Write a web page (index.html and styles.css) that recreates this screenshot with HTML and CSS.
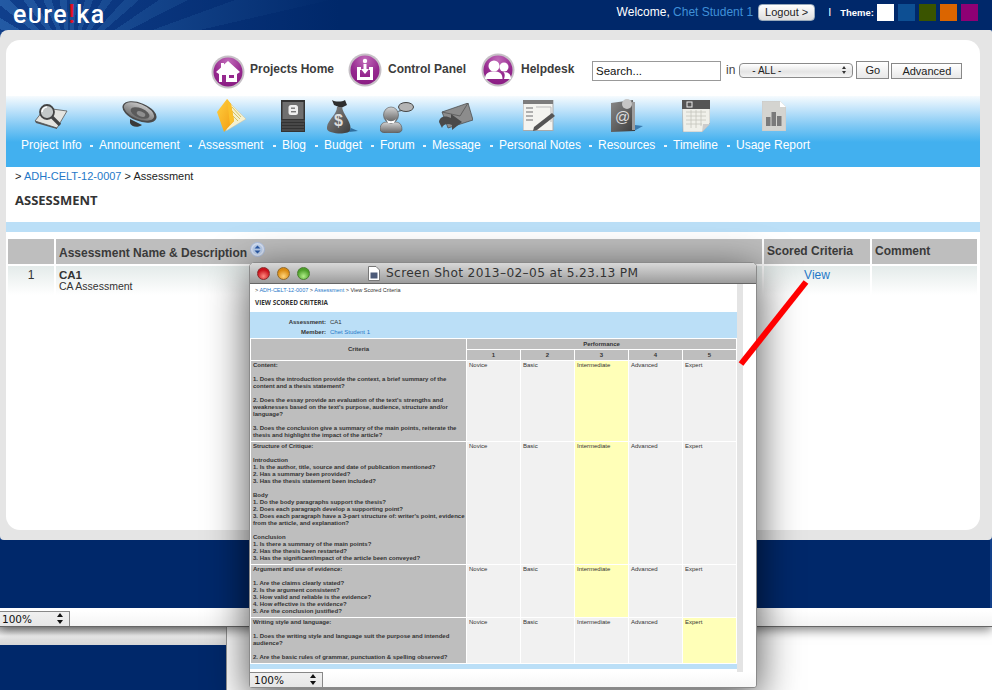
FILE: index.html
```html
<!DOCTYPE html>
<html lang="en">
<head>
<meta charset="utf-8">
<title>eUreka Assessment</title>
<link rel="stylesheet" href="styles.css">
</head>
<body>
<svg class="defs" width="0" height="0">
  <defs>
    <radialGradient id="dg" cx=".5" cy=".15" r=".95"><stop offset="0" stop-color="#c06ab8"/><stop offset=".55" stop-color="#96298f"/><stop offset="1" stop-color="#86187f"/></radialGradient>
    <linearGradient id="gm" x1="0" y1="0" x2="0" y2="1"><stop offset="0" stop-color="#d4d4d4"/><stop offset="1" stop-color="#5c5c5c"/></linearGradient>
    <linearGradient id="gd" x1="0" y1="0" x2="1" y2="1"><stop offset="0" stop-color="#8a8a8a"/><stop offset="1" stop-color="#3a3a3a"/></linearGradient>
    <linearGradient id="gl" x1="0" y1="0" x2="0" y2="1"><stop offset="0" stop-color="#c4c4c4"/><stop offset="1" stop-color="#6c6c6c"/></linearGradient>
    <linearGradient id="gf" x1="0" y1="0" x2="1" y2="1"><stop offset="0" stop-color="#ffd040"/><stop offset="1" stop-color="#f29a10"/></linearGradient>
    <g id="disc"><circle cx="17" cy="17" r="16.500" fill="#c6c0c6"/><circle cx="17" cy="17" r="14.500" fill="url(#dg)"/></g>
  </defs>
</svg>
<div class="desk">
  <div class="back-strip"><div class="back-navy"></div></div>

  <div class="win-back">
    <header class="topbar">
      <div class="logo">e<span class="cap">U</span>re<span class="bang">!</span>ka</div>
      <div class="user">
        <span class="welcome">Welcome, <a class="lnk">Chet Student 1</a></span>
        <button class="logout">Logout &gt;</button>
        <span class="sep">I</span>
        <span class="theme">Theme:</span>
        <i class="sw s1"></i><i class="sw s2"></i><i class="sw s3"></i><i class="sw s4"></i><i class="sw s5"></i>
      </div>
    </header>
    <div class="frame">
      <main class="card">
        <div class="toprow">
          <a class="hl"><svg class="disc" viewBox="0 0 34 34"><use href="#disc"/><path d="M17 6 L29 17 L26 19 V27 H8 V19 L5 17 L10 12.500 V8 H13 V9.500 Z" fill="#fff"/><rect x="18" y="20" width="5" height="3" fill="#96298f"/><rect x="11" y="20" width="4" height="7" fill="#96298f"/></svg><b>Projects Home</b></a>
          <a class="hl"><svg class="disc" viewBox="0 0 34 34"><use href="#disc"/><path d="M9 14 H13 V17 H12 V24 H22 V17 H21 V14 H25 V27 H9 Z" fill="#fff"/><circle cx="17" cy="8" r="2.200" fill="#fff"/><path d="M15.500 11 H18.500 V16 H21 L17 21 L13 16 H15.500 Z" fill="#fff"/></svg><b>Control Panel</b></a>
          <a class="hl"><svg class="disc" viewBox="0 0 34 34"><use href="#disc"/><circle cx="13" cy="13" r="5.500" fill="#fff"/><path d="M4 26 C4 20 8 18.500 13 18.500 C18 18.500 21.500 20 21.500 26 Z" fill="#fff"/><circle cx="23" cy="14" r="4.500" fill="#fff"/><path d="M23 26 H30 C30 20.500 27 19 22.500 19 C24 20.500 24 23 23 26 Z" fill="#fff"/></svg><b>Helpdesk</b></a>
          <form class="search">
            <input class="q" value="Search...">
            <span class="in">in</span>
            <span class="sel">- ALL -<span class="arrows"><i class="up"></i><i class="dn"></i></span></span>
            <button type="button" class="go">Go</button>
            <button type="button" class="adv">Advanced</button>
          </form>
        </div>

        <nav class="nav">
          <a class="ni w-info"><svg viewBox="0 0 34 26"><path d="M1 18 L11 5 L33 8 L23 25 Z" fill="#e4e4e0" stroke="#555" stroke-width=".8"/><path d="M1 18 L23 25 L23 26 L2 20Z" fill="#555"/><circle cx="13" cy="9" r="7" fill="#c4c8c8" stroke="#444" stroke-width="1.800"/><path d="M13 4 A5 5 0 0 0 8 9" fill="none" stroke="#fff" stroke-width="1.500"/><path d="M18 14 L26 22" stroke="#444" stroke-width="3.200"/></svg><span>Project Info</span></a>
          <a class="ni w-ann"><svg viewBox="0 0 35 26"><path d="M8 18 L20 24 C16 27 9 26 8 22 Z" fill="#3a3a3a"/><ellipse cx="17.500" cy="11" rx="18" ry="9" transform="rotate(22 17.500 11)" fill="#4a4a4a"/><ellipse cx="17" cy="10.500" rx="16" ry="7.500" transform="rotate(22 17 10.500)" fill="url(#gl)"/><ellipse cx="18" cy="12" rx="10" ry="4.800" transform="rotate(22 18 12)" fill="#5a5a5a"/><ellipse cx="19" cy="13" rx="4.500" ry="2.400" transform="rotate(22 19 13)" fill="#8e8e8e"/></svg><span>Announcement</span></a>
          <a class="ni w-ass"><svg viewBox="0 0 29 33"><path d="M12 3 L29 20 L9 32 Z" fill="#f5f0cf" stroke="#c8c0a0" stroke-width=".5"/><path d="M15 8 L24 18 M14 11 L23 20 M13 14 L21 22" stroke="#c9b84c" stroke-width=".8"/><path d="M0 13 L10 0 L14 5 L17 22 L7 33 Z" fill="url(#gf)"/><path d="M10 0 L14 5 L17 22 L13 26 Z" fill="#fbc02a"/></svg><span>Assessment</span></a>
          <a class="ni w-blog"><svg viewBox="0 0 24 32"><rect width="24" height="32" fill="#333"/><rect x="1.500" y="2" width="21" height="17" fill="#6f6f6f"/><rect x="7.500" y="5" width="9.500" height="10" rx="2.500" fill="#eee"/><rect x="10" y="7.500" width="4" height="1.400" fill="#777"/><rect x="10" y="11" width="5" height="1.400" fill="#777"/><path d="M0 21 H24 M1 24 H23 M1 27 H23 M1 30 H23" stroke="#6a6a6a" stroke-width=".8"/></svg><span>Blog</span></a>
          <a class="ni w-bud"><svg viewBox="0 0 31 35"><path d="M5 1 C8 3 15 3 18 1 L20 6 L14 9 L7 6Z" fill="#2e2e2e"/><path d="M10 8 C10 16 -1 22 0 30 C1 35 20 36 23 32 C26 24 16 16 15 8 Z" fill="url(#gd)"/><path d="M22 33 L31 32 L24 29Z" fill="#2f6e9e"/><text x="7" y="27" class="dollar">$</text></svg><span>Budget</span></a>
          <a class="ni w-for"><svg viewBox="0 0 34 31"><path d="M0 28 C0 20 5 19 11 21 C17 19 22 20 22 28 C21 33 1 33 0 28Z" fill="url(#gm)" stroke="#555" stroke-width=".6"/><ellipse cx="11" cy="13" rx="7.500" ry="8" fill="url(#gm)" stroke="#555" stroke-width=".6"/><path d="M6 17 C9 20 13 20 16 17 L14 21 H8Z" fill="#fff"/><ellipse cx="26" cy="5" rx="7.500" ry="4.500" fill="#b4b4b4" stroke="#444" stroke-width="1"/><path d="M20 8 L17 10 L22 9Z" fill="#555"/></svg><span>Forum</span></a>
          <a class="ni w-msg"><svg viewBox="0 0 34 27"><path d="M3 9 L29 0 L34 17 L9 25 Z" fill="#8c8c8c" stroke="#444" stroke-width=".7"/><path d="M3 9 L21 13 L29 0" fill="none" stroke="#555" stroke-width=".8"/><path d="M0 19 C1 12 8 13 12 15 L12 11 L23 19 L13 27 L13 22 C9 20 4 21 3 25 Z" fill="#4a4a4a"/></svg><span>Message</span></a>
          <a class="ni w-note"><svg viewBox="0 0 32 31"><rect width="30" height="30" y="0.500" fill="#f4f4f0" stroke="#aaa"/><rect width="30" height="4" fill="#7c7c7c"/><path d="M3 8 H10 M3 12 H10 M3 16 H10 M3 20 H10" stroke="#999" stroke-width="1.300"/><path d="M13 7 H28 V22" fill="none" stroke="#bbb"/><path d="M29 13 L32 16 L14 30 L10 31 L11 27 Z" fill="#555"/></svg><span>Personal Notes</span></a>
          <a class="ni w-res"><svg viewBox="0 0 32 34"><path d="M23 32 L32 27 L24 26Z" fill="#3a7cb0"/><path d="M0 4 L22 1 L24 32 L0 33 Z" fill="url(#gd)"/><rect x="21" y="3" width="3" height="28" fill="#9c9c9c"/><circle cx="16" cy="5" r="5" fill="#c6c6c6"/><text x="4" y="23" class="at">@</text></svg><span>Resources</span></a>
          <a class="ni w-time"><svg viewBox="0 0 28 32"><path d="M0 0 H28 V23 L20 32 H1 Z" fill="#f0f0ea" stroke="#999" stroke-width=".5"/><rect width="28" height="9" fill="#555"/><rect x="5" y="2" width="5" height="5" fill="none" stroke="#eee"/><path d="M4 12 H24 M4 16 H24 M4 20 H24 M4 24 H20 M9 10 V28 M14 10 V28 M19 10 V26" stroke="#c4c4bc" stroke-width=".8"/><path d="M20 32 L21 24 H28Z" fill="#ccc"/></svg><span>Timeline</span></a>
          <a class="ni w-usage"><svg viewBox="0 0 24 30"><path d="M0 0 H18 L24 6 V30 H0 Z" fill="#d4d4d0" stroke="#c0c0c0" stroke-width=".5"/><path d="M18 0 V6 H24Z" fill="#fff"/><rect x="4" y="16" width="4.500" height="9" fill="#7a7a7a"/><rect x="9.500" y="11" width="4.500" height="14" fill="#7a7a7a"/><rect x="15" y="15" width="4.500" height="10" fill="#7a7a7a"/></svg><span>Usage Report</span></a>
        </nav>

        <div class="crumb">&gt; <a class="lnk">ADH-CELT-12-0007</a> &gt; Assessment</div>
        <h1 class="title">ASSESSMENT</h1>
        <div class="band"></div>

        <table class="list">
          <colgroup><col class="c1"><col class="c2"><col class="c3"><col class="c4"></colgroup>
          <thead><tr><th></th><th class="nm"><span>Assessment Name &amp; Description</span><svg class="sort" viewBox="0 0 15 15"><circle cx="7.500" cy="7.500" r="7" fill="#dbe5f6" stroke="#aebfdf"/><circle cx="7.500" cy="7.500" r="5" fill="#bcd0ee"/><path d="M4.500 6.500 L7.500 3.500 L10.500 6.500Z M4.500 8.500 L7.500 11.500 L10.500 8.500Z" fill="#2a5aa8"/></svg></th><th>Scored Criteria</th><th>Comment</th></tr></thead>
          <tbody><tr>
            <td class="idx">1</td>
            <td class="desc"><b class="ca">CA1</b><br>CA Assessment</td>
            <td class="view"><a class="lnk">View</a></td>
            <td></td>
          </tr></tbody>
        </table>
      </main>
    </div>
    <div class="navy"></div>
    <div class="status"><div class="zoom">100%<span class="arrows big"><i class="up"></i><i class="dn"></i></span></div></div>
  </div>

  <section class="win-front">
    <div class="tbar">
      <i class="dot red"></i><i class="dot amber"></i><i class="dot green"></i>
      <div class="wtitle"><svg class="doc" viewBox="0 0 12 15"><path d="M.5.500 H8 L11.500 4 V14.500 H.5 Z" fill="#fff" stroke="#777"/><rect x="2.500" y="6.500" width="7" height="6" fill="#4c5a78"/></svg>Screen Shot 2013–02–05 at 5.23.13 PM</div>
    </div>
    <div class="shot">
      <div class="page">
        <div class="s-crumb">&gt; <a class="lnk">ADH-CELT-12-0007</a> &gt; <a class="lnk">Assessment</a> &gt; View Scored Criteria</div>
        <div class="s-title">VIEW SCORED CRITERIA</div>
        <div class="s-band">
          <div class="s-kv"><b>Assessment:</b><span>CA1</span></div>
          <div class="s-kv"><b>Member:</b><a class="lnk">Chet Student 1</a></div>
        </div>
        <table class="crit">
          <colgroup><col class="cc"><col class="cp"><col class="cp"><col class="cp"><col class="cp"><col class="cp"></colgroup>
          <thead>
            <tr class="h1"><th rowspan="2">Criteria</th><th colspan="5">Performance</th></tr>
            <tr class="h2"><th>1</th><th>2</th><th>3</th><th>4</th><th>5</th></tr>
          </thead>
          <tbody>
            <tr class="r1"><td class="q-c">Content:<br><br>1. Does the introduction provide the context, a brief summary of the content and a thesis statement?<br><br>2. Does the essay provide an evaluation of the text's strengths and weaknesses based on the text's purpose, audience, structure and/or language?<br><br>3. Does the conclusion give a summary of the main points, reiterate the thesis and highlight the impact of the article?</td><td>Novice</td><td>Basic</td><td class="hit">Intermediate</td><td>Advanced</td><td>Expert</td></tr>
            <tr class="r2"><td class="q-c">Structure of Critique:<br><br>Introduction<br>1. Is the author, title, source and date of publication mentioned?<br>2. Has a summary been provided?<br>3. Has the thesis statement been included?<br><br>Body<br>1. Do the body paragraphs support the thesis?<br>2. Does each paragraph develop a supporting point?<br>3. Does each paragraph have a 3-part structure of: writer's point, evidence from the article, and explanation?<br><br>Conclusion<br>1. Is there a summary of the main points?<br>2. Has the thesis been restarted?<br>3. Has the significant/impact of the article been conveyed?</td><td>Novice</td><td>Basic</td><td class="hit">Intermediate</td><td>Advanced</td><td>Expert</td></tr>
            <tr class="r3"><td class="q-c">Argument and use of evidence:<br><br>1. Are the claims clearly stated?<br>2. Is the argument consistent?<br>3. How valid and reliable is the evidence?<br>4. How effective is the evidence?<br>5. Are the conclusion justified?</td><td>Novice</td><td>Basic</td><td class="hit">Intermediate</td><td>Advanced</td><td>Expert</td></tr>
            <tr class="r4"><td class="q-c">Writing style and language:<br><br>1. Does the writing style and language suit the purpose and intended audience?<br><br>2. Are the basic rules of grammar, punctuation &amp; spelling observed?</td><td>Novice</td><td>Basic</td><td>Intermediate</td><td>Advanced</td><td class="hit">Expert</td></tr>
          </tbody>
        </table>
        <div class="s-foot"></div>
      </div>
      <div class="scrollbar"></div>
    </div>
    <div class="status front"><div class="zoom">100%<span class="arrows big"><i class="up"></i><i class="dn"></i></span></div></div>
  </section>

  <svg class="arrow" viewBox="0 0 992 690"><path d="M741 364 L806 282" stroke="#f00" stroke-width="6"/></svg>
</div>
</body>
</html>
```
FILE: styles.css
```css
* { box-sizing: border-box; }
html, body { margin: 0; padding: 0; }
body { width: 992px; height: 690px; overflow: hidden; background: #fff; font-family: "Liberation Sans", Arial, sans-serif; color: #2b2b2b; }
.defs { position: absolute; }
.lnk { color: #1f78c8; }

.desk { position: relative; width: 992px; height: 690px; overflow: hidden; background: #fff; }

/* window behind the back window */
.back-strip { position: absolute; left: 0; top: 627px; width: 227px; height: 63px; background: linear-gradient(#bdbdbd, #f2f2f2 9px, #e0e0e0 13px, #d8d8d8 18px); border-right: 1px solid #999; }
.back-navy { margin-top: 18px; height: 45px; background: #00286a; }

/* main browser window */
.win-back { position: absolute; left: 0; top: 0; width: 992px; height: 627px; background: #12408a; display: flex; flex-direction: column; border-bottom: 1px solid #666; box-shadow: 0 3px 10px rgba(0,0,0,.5); }
.topbar { height: 30px; flex: none; display: flex; justify-content: space-between; background: linear-gradient(90deg, rgba(0,40,106,0) 0, #00286a 340px), repeating-conic-gradient(from 0deg at 70px 60px, #235aa4 0 7deg, #103f8c 7deg 14deg); }
.logo { font: 500 25px/30px Roboto, "Liberation Sans", sans-serif; height: 30px; color: #fff; padding-left: 13px; letter-spacing: 1.500px; white-space: nowrap; }
.cap { font-size: 21px; }
.bang { color: #e01020; }
.user { display: flex; align-items: center; height: 24px; padding-right: 14px; color: #fff; }
.welcome { font-size: 12px; margin-right: 5px; white-space: nowrap; }
.welcome .lnk { color: #3f90d8; }
.logout { height: 17px; width: 57px; padding: 0; border: 1px solid #9ab; border-radius: 4px; background: linear-gradient(#fff, #ddd); font: 11px "Liberation Sans", sans-serif; color: #222; margin-right: 13px; }
.sep { margin-right: 9px; font-size: 11px; }
.theme { font-weight: bold; font-size: 9.500px; margin-right: 3px; white-space: nowrap; }
.sw { display: block; width: 17px; height: 17px; margin-left: 4px; }
.sw.s1 { background: #fff; margin-left: 0; }
.sw.s2 { background: #0d4f93; }
.sw.s3 { background: #3a5400; }
.sw.s4 { background: #db6500; }
.sw.s5 { background: #8e0074; }

.frame { height: 510px; flex: none; padding: 10px 12px 10px 6px; background: #e5e5e5; border-radius: 8px 2px 4px 4px; }
.card { height: 490px; background: #fff; border-radius: 14px; overflow: hidden; }
.navy { flex: 1; margin-right: 2px; background: #00286a; }
.status { height: 18px; flex: none; background: linear-gradient(#fff, #fff 3px, #f4f4f4); padding-top: 3px; }
.zoom { position: relative; width: 70px; height: 15px; background: linear-gradient(#f0f0f0, #e6e6e6); border: 1px solid #888; border-left: 0; border-bottom: 0; font: 10.500px/14px "DejaVu Sans", sans-serif; color: #111; padding-left: 2px; }
.arrows { position: absolute; display: flex; flex-direction: column; gap: 2px; }
.arrows i { display: block; width: 0; height: 0; border-left: 2px solid transparent; border-right: 2px solid transparent; }
.arrows .up { border-bottom: 3px solid #333; }
.arrows .dn { border-top: 3px solid #333; }
.arrows.big { right: 6px; top: 1px; gap: 3px; }
.arrows.big i { border-left-width: 3px; border-right-width: 3px; }
.arrows.big .up { border-bottom-width: 4px; border-bottom-color: #111; }
.arrows.big .dn { border-top-width: 4px; border-top-color: #111; }

.toprow { height: 56px; display: flex; align-items: flex-start; padding: 12px 0 0 205px; }
.hl { display: flex; align-items: center; font-size: 12px; color: #3c3c3c; height: 36px; }
.hl b { margin-left: 6px; margin-top: -3px; white-space: nowrap; }
.disc { width: 34px; height: 34px; display: block; flex: none; }
.hl:nth-child(1) { width: 137px; }
.hl:nth-child(1) b { margin-left: 5px; }
.hl:nth-child(1) .disc { margin-top: 3px; }
.hl:nth-child(2) { width: 133px; }
.hl:nth-child(2) .disc { margin-top: -1px; }
.hl:nth-child(3) { width: 111px; }
.search { display: flex; align-items: flex-start; margin-top: 9px; color: #222; }
.q { width: 129px; height: 20px; border: 1px solid #999; padding: 0 3px; font: 11.500px "Liberation Sans", sans-serif; color: #111; background: #fff; outline: 0; }
.in { margin: 2px 0 0 5px; font-size: 12px; color: #444; }
.sel { position: relative; margin: 2px 3px 0 4px; width: 114px; height: 15px; border: 1px solid #8a8a8a; border-radius: 4px; background: linear-gradient(#fff, #e4e4e4 60%, #f4f4f4); font-size: 10px; line-height: 13px; padding-left: 12px; }
.sel .arrows { right: 6px; top: 2px; gap: 2px; }
.go { height: 18px; width: 33px; padding: 0; border: 1px solid #888; background: linear-gradient(#fff, #e8e8e8); font: 11px "Liberation Sans", sans-serif; color: #222; }
.adv { height: 16px; width: 71px; padding: 0; margin: 2px 0 0 2px; border: 1px solid #888; background: linear-gradient(#fff, #e8e8e8); font: 11px "Liberation Sans", sans-serif; color: #222; }

.nav { height: 71px; padding-left: 15px; display: flex; background: linear-gradient(#f6fbfe 0, #c0e3fa 14px, #7fc8f4 30px, #42b0ef 46px); }
.ni { display: flex; flex-direction: column; align-items: flex-start; color: #fff; font-size: 12px; position: relative; height: 60px; white-space: nowrap; }
.ni svg { display: block; flex: none; }
.ni span { position: absolute; top: 42px; left: 0; }
.ni:not(:last-child)::after { content: ""; position: absolute; top: 49px; right: 6px; width: 3px; height: 2px; background: #e8f4fc; }
.w-info { width: 78px; } .w-info svg { width: 34px; height: 26px; margin: 7px 0 0 13px; }
.w-ann { width: 99px; } .w-ann svg { width: 35px; height: 26px; margin: 5px 0 0 23px; }
.w-ass { width: 84px; } .w-ass svg { width: 29px; height: 33px; margin: 3px 0 0 19px; }
.w-blog { width: 42px; } .w-blog svg { width: 24px; height: 32px; margin: 4px 0 0 -1px; }
.w-bud { width: 56px; } .w-bud svg { width: 31px; height: 35px; margin: 3px 0 0 3px; }
.w-for { width: 52px; } .w-for svg { width: 34px; height: 31px; margin: 6px 0 0 0; }
.w-msg { width: 67px; } .w-msg svg { width: 34px; height: 27px; margin: 7px 0 0 7px; }
.w-note { width: 99px; } .w-note svg { width: 32px; height: 31px; margin: 4px 0 0 24px; }
.w-res { width: 75px; } .w-res svg { width: 32px; height: 34px; margin: 3px 0 0 13px; }
.w-time { width: 63px; } .w-time svg { width: 28px; height: 32px; margin: 4px 0 0 9px; }
.w-usage { width: 80px; } .w-usage svg { width: 24px; height: 30px; margin: 5px 0 0 26px; }
.dollar { font: bold 16px "Liberation Sans", sans-serif; fill: #ddd; }
.at { font: 15px "Liberation Sans", sans-serif; fill: #ddd; }

.crumb { margin: 3px 0 0 9px; font-size: 11px; line-height: 13px; color: #222; }
.title { margin: 9px 0 0 9px; font: bold 13px/17px "Open Sans", "Liberation Sans", sans-serif; color: #333; }
.band { height: 10px; margin-top: 13px; background: #bbdff7; }
.list { margin: 5px 0 0 0; width: 973px; border-collapse: separate; border-spacing: 2px; table-layout: fixed; font-size: 12px; }
.c1 { width: 46px; } .c2 { width: 706px; } .c3 { width: 106px; } .c4 { width: 105px; }
.list th { height: 25px; background: #bebebe; color: #3a3a3a; font-size: 12px; text-align: left; padding: 0 0 2px 3px; white-space: nowrap; }
.nm span { position: relative; top: 3px; }
.sort { position: relative; top: -1px; left: 3px; width: 15px; height: 15px; display: inline-block; vertical-align: middle; }
.list td { height: 29px; vertical-align: top; background: linear-gradient(#e4ebea, #fff); padding: 4px 3px 2px; line-height: 11px; color: #333; }
.desc { font-size: 10.500px; }
.ca { font-size: 11.500px; }
.idx { text-align: center; }
.view { text-align: center; font-size: 12px; }

/* front screenshot window */
.win-front { position: absolute; left: 249px; top: 262px; width: 508px; height: 426px; background: #fcfcfc; border-radius: 5px 5px 3px 3px; border: 1px solid #8a8a8a; box-shadow: 0 10px 40px 2px rgba(0,0,0,.65); display: flex; flex-direction: column; }
.tbar { height: 21px; flex: none; position: relative; display: flex; align-items: center; padding-left: 7px; gap: 7px; background: linear-gradient(#d8d8d8, #bbb 50%, #9c9c9c); border-bottom: 1px solid #666; border-radius: 4px 4px 0 0; }
.dot { display: block; width: 13px; height: 13px; border-radius: 50%; }
.red { background: radial-gradient(circle at 50% 75%, #ff8a80, #c9101a 65%); border: 1px solid #8a2a2a; }
.amber { background: radial-gradient(circle at 50% 75%, #ffd47a, #d98a10 65%); border: 1px solid #90682a; }
.green { background: radial-gradient(circle at 50% 75%, #b0ee88, #4c9e28 65%); border: 1px solid #4a7e30; }
.wtitle { position: absolute; left: 118px; top: 1px; display: flex; align-items: center; font: 12.200px/19px "DejaVu Sans", sans-serif; letter-spacing: .35px; color: #333; white-space: nowrap; }
.doc { width: 12px; height: 15px; margin-right: 6px; }
.shot { height: 388px; flex: none; display: flex; background: #fff; overflow: hidden; }
.page { width: 487px; flex: none; background: #fff; }
.scrollbar { width: 6px; flex: none; background: #e4e4e4; }
.s-crumb { font-size: 5.500px; line-height: 7px; margin: 3px 0 0 5px; color: #333; }
.s-title { font: bold 6.400px/8px "Open Sans", "Liberation Sans", sans-serif; margin: 5px 0 0 5px; color: #333; }
.s-band { height: 26px; margin-top: 5px; padding-top: 5px; background: #bbdff7; font-size: 6px; line-height: 10px; color: #333; }
.s-kv { display: flex; gap: 4px; }
.s-kv b { width: 76px; text-align: right; }
.crit { width: 487px; border-collapse: separate; border-spacing: 1px; table-layout: fixed; font-size: 6px; line-height: 7px; color: #333; }
.cc { width: 215px; } .cp { width: 53px; }
.crit th { background: #bebebe; text-align: center; color: #333; padding: 0; font-weight: bold; }
.h1 th, .h2 th { height: 10px; }
.crit td { vertical-align: top; background: #f1f1f1; padding: 1px 1px 0 2px; }
.crit .q-c { background: #bebebe; font-weight: bold; color: #333; }
.crit .hit { background: #ffffb8; }
.r1 td { height: 80px; } .r2 td { height: 122px; } .r3 td { height: 52px; } .r4 td { height: 45px; }
.s-foot { height: 5px; background: #bbdff7; }
.status.front { height: 15px; padding-top: 0; background: linear-gradient(#fff, #f6f6f6); border-radius: 0 0 3px 3px; }
.status.front .zoom { width: 73px; height: 15px; padding-left: 4px; border-left: 0; }
.arrow { position: absolute; inset: 0; width: 992px; height: 690px; pointer-events: none; }
```
